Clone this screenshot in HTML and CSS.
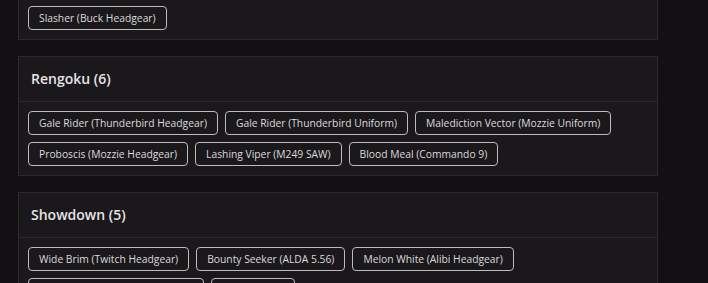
FILE: index.html
```html
<!DOCTYPE html>
<html lang="en">
<head>
    <meta charset="UTF-8">
    <meta name="viewport" content="width=device-width, initial-scale=1.0">
    <title>Skins by Event</title>
    <link rel="stylesheet" href="styles.css">
</head>
<body>
    <div class="container">
        <div class="card card-cut">
            <div class="card-body">
                <span class="tag">Slasher (Buck Headgear)</span>
            </div>
        </div>
        <div class="card">
            <h2 class="card-title">Rengoku (6)</h2>
            <div class="card-body">
                <span class="tag">Gale Rider (Thunderbird Headgear)</span>
                <span class="tag">Gale Rider (Thunderbird Uniform)</span>
                <span class="tag">Malediction Vector (Mozzie Uniform)</span>
                <span class="tag">Proboscis (Mozzie Headgear)</span>
                <span class="tag">Lashing Viper (M249 SAW)</span>
                <span class="tag">Blood Meal (Commando 9)</span>
            </div>
        </div>
        <div class="card">
            <h2 class="card-title">Showdown (5)</h2>
            <div class="card-body">
                <span class="tag">Wide Brim (Twitch Headgear)</span>
                <span class="tag">Bounty Seeker (ALDA 5.56)</span>
                <span class="tag">Melon White (Alibi Headgear)</span>
                <span class="tag">Sheriff's Badge (Twitch Uniform)</span>
                <span class="tag">Tumbleweed</span>
            </div>
        </div>
    </div>
</body>
</html>
```

FILE: styles.css
```css
body {
    margin: 0;
    background-color: #121013;
    font-family: "Open Sans", Arial, sans-serif;
    color: #e2e0e3;
}
.container {
    width: 640px;
    padding: 0 18px;
    display: flex;
    flex-direction: column;
    gap: 16px;
}
.card {
    background-color: #1a181b;
    border: 1px solid #2b292c;
}
.card-cut {
    border-top: none;
    margin-top: -3px;
}
.card-title {
    margin: 0;
    height: 44px;
    line-height: 44px;
    padding: 0 12px;
    font-size: 14px;
    font-weight: 600;
    color: #e6e4e7;
    border-bottom: 1px solid #2b292c;
}
.card-body {
    display: flex;
    flex-wrap: wrap;
    gap: 7px 7px;
    padding: 9px 9px 9px;
}
.tag {
    display: inline-block;
    height: 22px;
    line-height: 22px;
    padding: 0 10px;
    font-size: 10.3px;
    color: #dcdadd;
    border: 1px solid #bdbbbe;
    border-radius: 4px;
}
```
